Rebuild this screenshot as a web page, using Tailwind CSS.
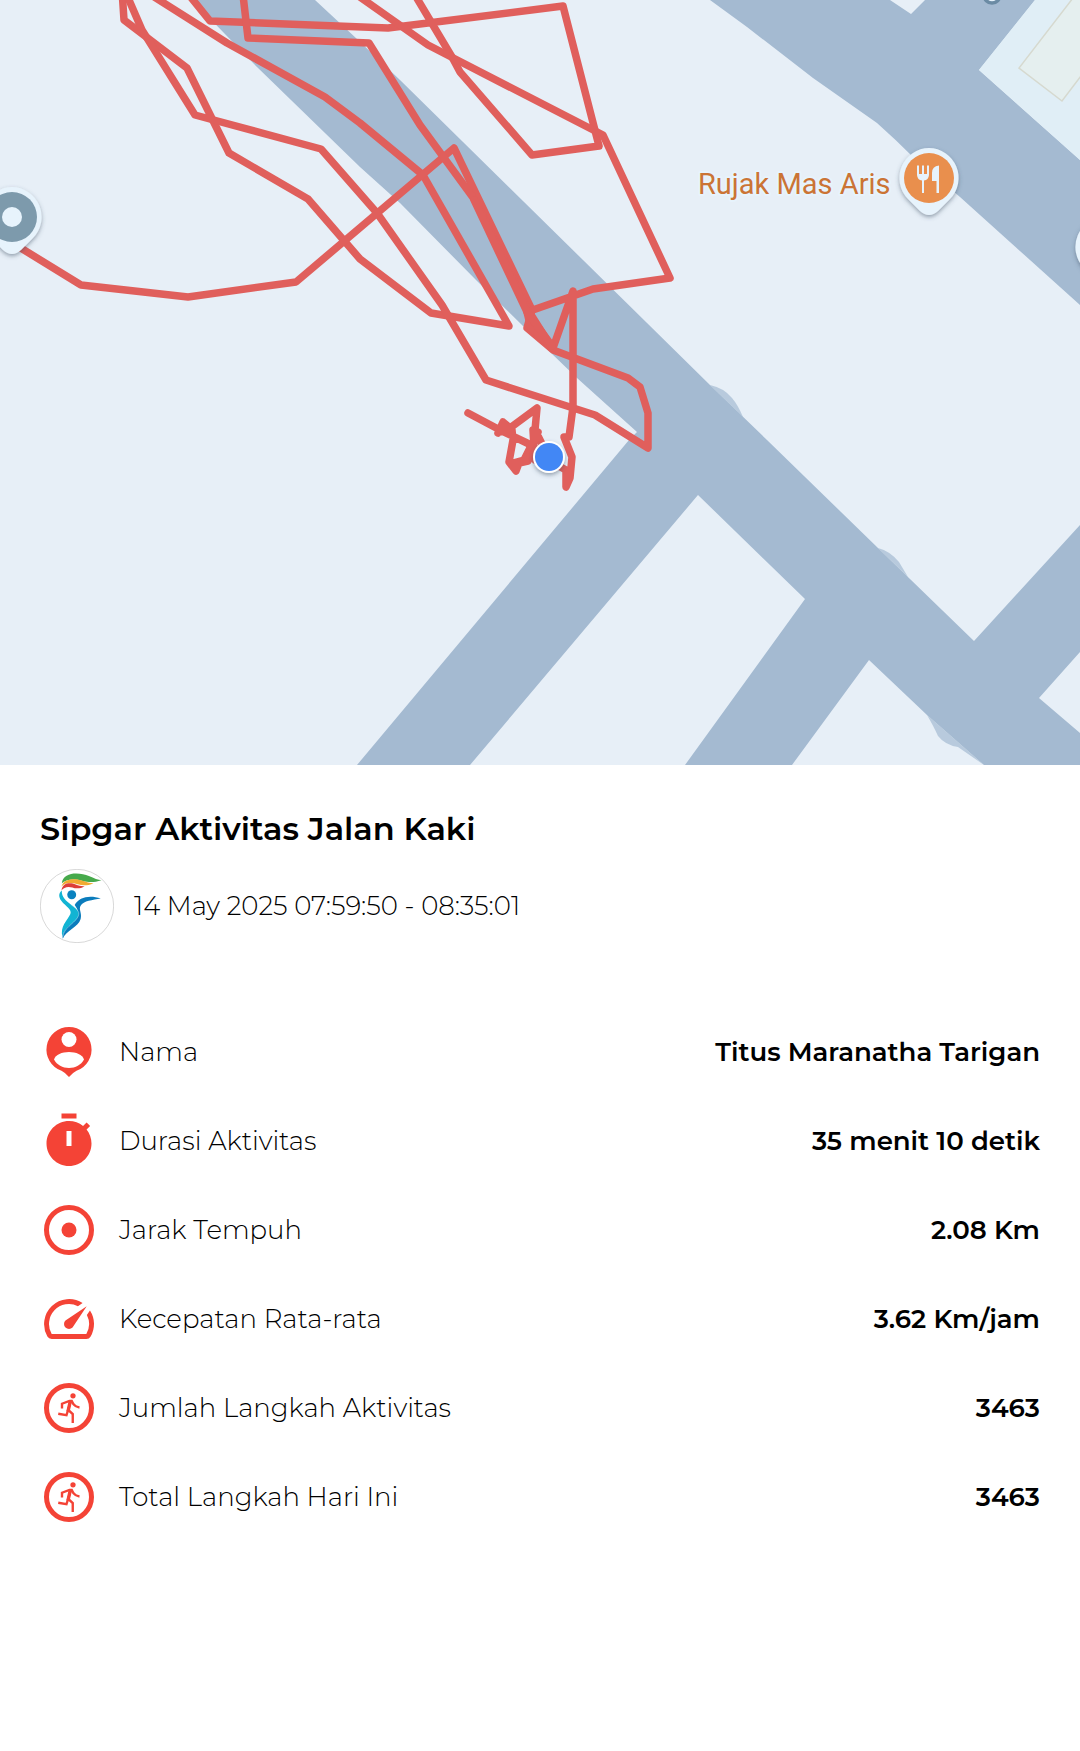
<!DOCTYPE html>
<html lang="id">

<head>
    <meta charset="UTF-8">
    <meta name="viewport" content="width=device-width, initial-scale=1.0">
    <title>Sipgar Aktivitas Jalan Kaki</title>
    <script src="https://cdn.jsdelivr.net/npm/@tailwindcss/browser@4"></script>
</head>

<body class="min-h-screen bg-white font-['Montserrat','Inter',sans-serif] text-black">

    <!-- Route Map -->
    <div class="h-[765px] w-full overflow-hidden bg-[#e7eff7]">
        <svg class="block h-full w-full" viewBox="0 0 1080 765" preserveAspectRatio="xMidYMid slice" role="img" aria-label="Peta rute">
            <defs>
                <filter id="pin-shadow" x="-30%" y="-30%" width="160%" height="160%">
                    <feDropShadow dx="0" dy="2" stdDeviation="2" flood-color="#3c5064" flood-opacity=".5" />
                </filter>
                <path id="pin" d="M0-30A30 30 0 0 1 21 21L9 33Q0 41-9 33L-21 21A30 30 0 0 1 0-30z" fill="#e7f3fc" filter="url(#pin-shadow)" />
            </defs>

            <!-- Roads -->
            <g fill="#a4bad1">
                <path d="M192 0H315L357 39 400 80 583 260 710 385 767 440 878 548 974 641 1080 525V652L1039 698 1080 733V765H984L927 715 869 660 792 765H685L805 599 698 495 470 765H357L629 440 637 432 577 378 523 326 477 281 400 203 360 167 257 67z" />
                <path d="M710 0H890L911 14 925 0H1035L979 70 1080 160V305L960 197 913 157Q895 139 877 123L813 78 747 27z" />
                <path d="M710 385Q724 388 732 398 738 405 743 417zM878 548Q890 551 899 562L908 577zM927 715Q934 727 938 736 945 745 958 747L984 765z" opacity=".7" />
            </g>
            <path d="M1035 0H1080V160L979 70z" fill="#e0eef6" />
            <path d="M1073-2L1019 68 1062 101 1084 72V-2z" fill="#e5efef" stroke="#d6d9cf" stroke-width="1.5" />

            <!-- Walked route -->
            <g fill="none" stroke="#e05f5c" stroke-width="7.5" stroke-linejoin="round" stroke-linecap="round">
                <path d="M122-10L124 20 187 68 229 153 308 199 360 259 431 313 509 326 423 175 360 123 325 97 227 43 148-7" />
                <path d="M125-10L129 0 142 30 195 115 321 149 377 213 442 305 486 380 595 415 648 448V413L640 387 628 378 553 350 527 328 532 310" />
                <path d="M11 242L81 285 188 297 296 282 454 148 532 310" />
                <path d="M185-10L210 21 388 28 563 6 599 146 532 155 460 72 452 57 412-10" />
                <path d="M243-5L248 38 369 43 420 125 477 203 528 310 552 348" />
                <path d="M350-10L428 45 603 135 670 278 593 289 527 312 531 328 553 348 573 291V360L573 407 569 437 564 437 572 457 570 478 566 487V470L557 465" />
                <path d="M474 200L527 312 552 346" />
                <path d="M468 413L500 430 527 443 548 456M498 433L503 422 510 428 537 408 535 430 540 440 548 456M499 432L512 430 513 440 509 462 516 471 519 463 528 461 534 447 533 430M513 463L524 460 534 440 538 432M530 447L535 460" />
            </g>

            <!-- Current location -->
            <circle cx="549" cy="457" r="16" fill="#fff" filter="url(#pin-shadow)" />
            <circle cx="549" cy="457" r="14" fill="#4287f5" />

            <!-- Places -->
            <use href="#pin" x="12" y="217" />
            <circle cx="12" cy="217" r="25" fill="#7d9aac" />
            <circle cx="12" cy="217" r="10" fill="#e7f3fc" />

            <use href="#pin" x="929" y="178" />
            <circle cx="929" cy="178" r="25" fill="#e98f4d" />
            <path d="M917 165.500H919V174H922V165.500H924V174H927V165.500H929V175Q928.500 180 924 180.500V193H922V180.500Q917.500 180 917 175zM939 193H936.500V181H932V173Q932 166 939 165.500z" fill="#e7f3fc" />

            <use href="#pin" x="1105" y="247" />
            <circle cx="992" cy="-5" r="8" fill="#e7f3fc" stroke="#6b8ba4" stroke-width="3.500" />

            <text x="698" y="194" font-family="Roboto, sans-serif" font-size="29" fill="#cb7435" stroke="#e7f3fc" stroke-width="4" stroke-linejoin="round" paint-order="stroke">Rujak Mas Aris</text>
        </svg>
    </div>

    <!-- Activity Detail -->
    <main class="px-10 pt-11 pb-10">
        <h1 class="text-[32px] leading-10 font-semibold">Sipgar Aktivitas Jalan Kaki</h1>

        <div class="mt-5 flex items-center gap-5">
            <svg class="size-[74px] shrink-0" viewBox="14 27 224 224" aria-hidden="true">
                <circle cx="126" cy="139" r="111" fill="#fff" stroke="#c4c4c4" stroke-width="2" />
                <path d="M80 70C84 34 135 37 162 48 178 55 190 60 200 61 176 69 160 67 143 63 116 55 92 58 80 70z" fill="#46a94b" />
                <path d="M79 80C86 55 119 55 141 62 154 67 165 70 176 70 156 79 142 77 128 73 106 67 88 69 79 80z" fill="#f2ab31" />
                <path d="M79 92C83 67 106 68 122 74 132 78 141 80 149 79 137 87 123 87 112 83 98 79 86 82 79 92z" fill="#dd3e38" />
                <circle cx="110" cy="105" r="13.500" fill="#0b82bf" />
                <path d="M119 136C132 112 163 105 198 116 173 121 146 122 137 138 130 149 142 160 137 178 130 204 91 213 83 238 78 208 113 191 126 164 132 155 126 146 119 136z" fill="#0b7cbc" />
                <path d="M80 92C79 112 92 122 109 136 127 149 138 158 127 175 115 193 84 205 82 232 74 201 96 183 106 163 112 149 91 140 79 124 69 110 71 99 80 92z" fill="#12b4d3" />
                <path d="M109 136C127 149 138 158 127 175 115 193 86 206 83 232" fill="none" stroke="#bfe6f3" stroke-width="1.500" />
            </svg>
            <p class="text-[26px] leading-8 font-light">14 May 2025 07:59:50 - 08:35:01</p>
        </div>

        <dl class="mt-[79px] -ml-px flex flex-col gap-[29px] text-[26px] leading-8">
            <div class="flex h-[60px] items-center justify-between">
                <dt class="flex items-center gap-5 font-light">
                    <svg class="size-[60px] shrink-0 text-[#f44336]" viewBox="0 0 24 24" fill="currentColor" aria-hidden="true">
                        <path d="M12 2a9 9 0 0 1 3 17.490Q13.700 20.100 12 22 10.300 20.100 9 19.490A9 9 0 0 1 12 2z" />
                        <circle cx="12" cy="7" r="3" fill="#fff" />
                        <path d="M6 15c.6-1.900 3.200-3 6-3s5.400 1.100 6 3c-1.200 2.200-3.400 3.400-6 3.400S7.200 17.200 6 15z" fill="#fff" />
                    </svg>
                    Nama
                </dt>
                <dd class="font-semibold">Titus Maranatha Tarigan</dd>
            </div>
            <div class="flex h-[60px] items-center justify-between">
                <dt class="flex items-center gap-5 font-light">
                    <svg class="size-[60px] shrink-0 text-[#f44336]" viewBox="0 0 24 24" fill="currentColor" aria-hidden="true">
                        <path d="M9 1h6v2H9zm10.030 6.390 1.420-1.420c-.43-.51-.9-.99-1.410-1.410l-1.420 1.420C16.070 4.740 14.120 4 12 4c-4.970 0-9 4.030-9 9s4.020 9 9 9 9-4.030 9-9c0-2.120-.74-4.070-1.970-5.610z" />
                        <path d="M11 8h2v6h-2z" fill="#fff" />
                    </svg>
                    Durasi Aktivitas
                </dt>
                <dd class="font-semibold">35 menit 10 detik</dd>
            </div>
            <div class="flex h-[60px] items-center justify-between">
                <dt class="flex items-center gap-5 font-light">
                    <svg class="size-[60px] shrink-0 text-[#f44336]" viewBox="0 0 24 24" fill="currentColor" aria-hidden="true">
                        <circle cx="12" cy="12" r="9" fill="none" stroke="currentColor" stroke-width="2" />
                        <circle cx="12" cy="12" r="3" />
                    </svg>
                    Jarak Tempuh
                </dt>
                <dd class="font-semibold">2.08 Km</dd>
            </div>
            <div class="flex h-[60px] items-center justify-between">
                <dt class="flex items-center gap-5 font-light">
                    <svg class="size-[60px] shrink-0 text-[#f44336]" viewBox="0 0 24 24" fill="currentColor" aria-hidden="true">
                        <path d="m20.380 8.570-1.230 1.850a8 8 0 0 1-.22 7.580H5.070A8 8 0 0 1 15.580 6.850l1.850-1.230A10 10 0 0 0 3.350 19a2 2 0 0 0 1.720 1h13.850a2 2 0 0 0 1.740-1 10 10 0 0 0-.27-10.440zm-9.790 6.840a2 2 0 0 0 2.830 0l5.660-8.490-8.490 5.660a2 2 0 0 0 0 2.830z" />
                    </svg>
                    Kecepatan Rata-rata
                </dt>
                <dd class="font-semibold">3.62 Km/jam</dd>
            </div>
            <div class="flex h-[60px] items-center justify-between">
                <dt class="flex items-center gap-5 font-light">
                    <svg class="size-[60px] shrink-0 text-[#f44336]" viewBox="0 0 24 24" fill="currentColor" aria-hidden="true">
                        <g id="run">
                            <circle cx="12" cy="12" r="9" fill="none" stroke="currentColor" stroke-width="2" />
                            <circle cx="13.600" cy="7.100" r="1.050" />
                            <path d="M11.900 8.900l1.400.2-.9 3.700-1.500.6z" />
                            <path d="M9.200 12.200v-1.900l3-1.100h.9l.7 1.300q.9 1.100 2.400 1.300M12.600 9.500l-1.600 5.400-3.300-.6M11.500 12.600l2 1.800v3.600" fill="none" stroke="currentColor" stroke-width=".95" />
                        </g>
                    </svg>
                    Jumlah Langkah Aktivitas
                </dt>
                <dd class="font-semibold">3463</dd>
            </div>
            <div class="flex h-[60px] items-center justify-between">
                <dt class="flex items-center gap-5 font-light">
                    <svg class="size-[60px] shrink-0 text-[#f44336]" viewBox="0 0 24 24" fill="currentColor" aria-hidden="true">
                        <use href="#run" />
                    </svg>
                    Total Langkah Hari Ini
                </dt>
                <dd class="font-semibold">3463</dd>
            </div>
        </dl>
    </main>
</body>

</html>
